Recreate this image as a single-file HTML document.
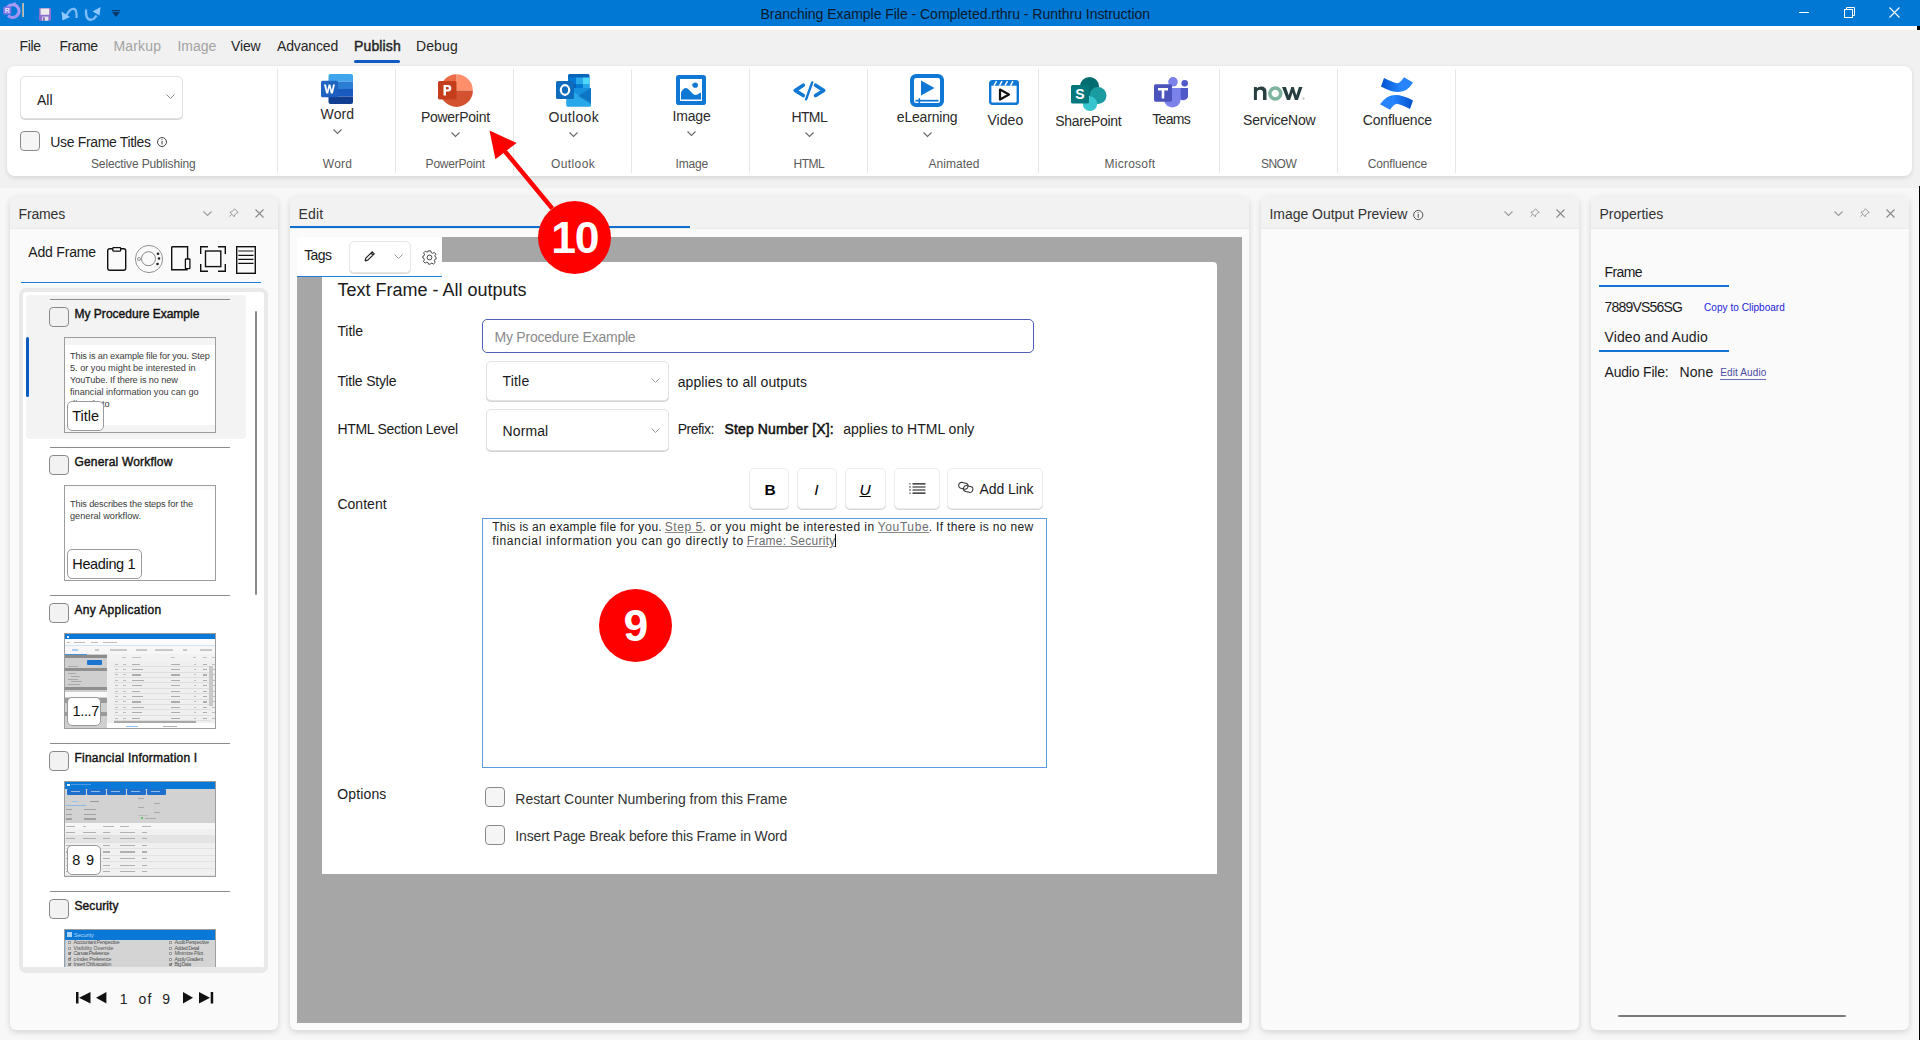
<!DOCTYPE html>
<html><head><meta charset="utf-8"><title>Runthru</title>
<style>
html,body{margin:0;padding:0;width:1920px;height:1040px;overflow:hidden;background:#f3f3f3;font-family:"Liberation Sans",sans-serif;}
.t{position:absolute;line-height:1;white-space:nowrap;}
svg{overflow:visible}
</style></head><body>
<div style="position:absolute;left:0px;top:0px;width:1920px;height:26px;background:#0078d4"></div>
<div style="position:absolute;left:0px;top:26px;width:1920px;height:4px;background:#ffffff"></div>
<div style="position:absolute;left:0px;top:30px;width:1920px;height:158px;background:#f1f1f1"></div>
<div style="position:absolute;left:0px;top:188px;width:1920px;height:852px;background:#f7f7f7"></div>
<div style="position:absolute;left:1919px;top:186px;width:1px;height:854px;background:#000"></div>
<div style="position:absolute;left:1917px;top:26px;width:3px;height:4px;background:#000"></div>
<svg style="position:absolute;left:0px;top:0px;" width="26" height="26" viewBox="0 0 26 26"><path d="M6.5 12 A6.3 6.3 0 1 1 18 14.5" fill="none" stroke="#a99cf5" stroke-width="3"/>
<path d="M8 15.5 A6.3 6.3 0 0 0 18.5 13" fill="none" stroke="#9f92f2" stroke-width="3"/>
<path d="M12 4.5 L14.6 2 L17.5 5.5z" fill="#a99cf5"/>
<rect x="3.1" y="6.6" width="8.2" height="7.8" rx="1.5" fill="#7f74e8"/>
<text x="7.2" y="13" font-size="7" font-weight="700" fill="#e8e4ff" text-anchor="middle" font-family="Liberation Sans">R</text></svg>
<div style="position:absolute;left:22px;top:3px;width:2px;height:14px;background:linear-gradient(90deg,#b49a78,#9fd0f0)"></div>
<svg style="position:absolute;left:39px;top:7.5px;" width="12" height="13" viewBox="0 0 12 13"><rect x="0" y="0" width="12" height="12.7" rx="0.8" fill="#8d6fcc"/><rect x="1.6" y="0.5" width="8.6" height="6.3" fill="#ececec"/><rect x="3.2" y="8.6" width="6.2" height="4.1" fill="#e6e2f0"/><rect x="4.3" y="9.3" width="1.3" height="3.4" fill="#5a3f9e"/></svg>
<svg style="position:absolute;left:61px;top:7px;" width="17" height="14" viewBox="0 0 17 14"><path d="M5.5 8.5 Q9 1 13.5 2 Q16 3.5 15.5 11" fill="none" stroke="#7dbcf8" stroke-width="2.4"/>
<path d="M0.5 4.5 L9 10 L1.5 13.6z" fill="#8ec8ff"/></svg>
<svg style="position:absolute;left:85px;top:7px;" width="16" height="14" viewBox="0 0 16 14"><path d="M1 2.5 Q0.5 12 5 12.8 Q9 13 11.5 8.5" fill="none" stroke="#7dbcf8" stroke-width="2.4"/>
<path d="M15.5 0 L14.6 8.5 L7.5 4.5z" fill="#8ec8ff"/></svg>
<svg style="position:absolute;left:112px;top:9px;" width="8" height="8" viewBox="0 0 8 8"><rect x="0" y="1" width="8" height="1.2" fill="#0a3a6a"/><path d="M0 3 L8 3 L4 8z" fill="#0a3a6a"/></svg>
<div class="t" style="left:760.5px;top:7.1px;font-size:14px;color:#0b1a2e;letter-spacing:-0.03px;">Branching Example File - Completed.rthru - Runthru Instruction</div>
<div style="position:absolute;left:1799px;top:12px;width:10px;height:1px;background:#fff"></div>
<svg style="position:absolute;left:1844px;top:7px;" width="11" height="11" viewBox="0 0 11 11"><rect x="0.5" y="2.5" width="8" height="8" fill="none" stroke="#fff" stroke-width="1"/><path d="M2.5 2.5 V0.5 H10.5 V8.5 H8.5" fill="none" stroke="#fff" stroke-width="1"/></svg>
<svg style="position:absolute;left:1889px;top:7px;" width="11" height="11" viewBox="0 0 11 11"><path d="M0.5 0.5 L10.5 10.5 M10.5 0.5 L0.5 10.5" stroke="#fff" stroke-width="1.1"/></svg>
<div class="t" style="left:19.4px;top:39.1px;font-size:14px;color:#262626;letter-spacing:-0.29px;">File</div>
<div class="t" style="left:59.4px;top:39.1px;font-size:14px;color:#262626;letter-spacing:-0.44px;">Frame</div>
<div class="t" style="left:113.4px;top:39.1px;font-size:14px;color:#a3a3a3;letter-spacing:0.20px;">Markup</div>
<div class="t" style="left:177.5px;top:39.1px;font-size:14px;color:#a3a3a3;letter-spacing:-0.05px;">Image</div>
<div class="t" style="left:231.0px;top:39.1px;font-size:14px;color:#262626;letter-spacing:-0.13px;">View</div>
<div class="t" style="left:277.0px;top:39.1px;font-size:14px;color:#262626;letter-spacing:-0.15px;">Advanced</div>
<div class="t" style="left:354.0px;top:39.1px;font-size:14px;color:#262626;-webkit-text-stroke:0.45px #262626;letter-spacing:0.13px;">Publish</div>
<div class="t" style="left:416.0px;top:39.1px;font-size:14px;color:#262626;letter-spacing:0.11px;">Debug</div>
<div style="position:absolute;left:354px;top:60px;width:46px;height:2.5px;background:#0f5bc2;border-radius:2px"></div>
<div style="position:absolute;left:7px;top:66px;width:1905px;height:110px;background:#fff;border-radius:8px;box-shadow:0 1.5px 4px rgba(0,0,0,0.11)"></div>
<div style="position:absolute;left:277px;top:69px;width:1px;height:104px;background:#e6e6e6"></div>
<div style="position:absolute;left:395px;top:69px;width:1px;height:104px;background:#e6e6e6"></div>
<div style="position:absolute;left:513px;top:69px;width:1px;height:104px;background:#e6e6e6"></div>
<div style="position:absolute;left:631px;top:69px;width:1px;height:104px;background:#e6e6e6"></div>
<div style="position:absolute;left:749px;top:69px;width:1px;height:104px;background:#e6e6e6"></div>
<div style="position:absolute;left:867px;top:69px;width:1px;height:104px;background:#e6e6e6"></div>
<div style="position:absolute;left:1038px;top:69px;width:1px;height:104px;background:#e6e6e6"></div>
<div style="position:absolute;left:1219px;top:69px;width:1px;height:104px;background:#e6e6e6"></div>
<div style="position:absolute;left:1337px;top:69px;width:1px;height:104px;background:#e6e6e6"></div>
<div style="position:absolute;left:1455px;top:69px;width:1px;height:104px;background:#e6e6e6"></div>
<div style="position:absolute;left:20px;top:76px;width:163px;height:43px;background:#fff;border:1px solid #e3e3e3;border-radius:5px;box-sizing:border-box;box-shadow:0 1px 0 #d6d6d6"></div>
<div class="t" style="left:37.0px;top:92.6px;font-size:14px;color:#1a1a1a;">All</div>
<svg style="position:absolute;left:166px;top:94px;" width="9" height="6" viewBox="0 0 9 6"><path d="M0.5 0.5 L4.5 4.5 L8.5 0.5" fill="none" stroke="#8a8a8a" stroke-width="1"/></svg>
<div style="position:absolute;left:20px;top:131px;width:20px;height:20px;background:#f5f5f5;border:1px solid #8a8a8a;border-radius:4px;box-sizing:border-box"></div>
<div class="t" style="left:50.3px;top:134.8px;font-size:14px;color:#1f1f1f;letter-spacing:-0.34px;">Use Frame Titles</div>
<svg style="position:absolute;left:157px;top:137px;" width="10" height="10" viewBox="0 0 10 10"><circle cx="5" cy="5" r="4.5" fill="none" stroke="#444" stroke-width="1"/><rect x="4.5" y="4" width="1" height="3.5" fill="#444"/><rect x="4.5" y="2.2" width="1" height="1" fill="#444"/></svg>
<div class="t" style="left:91.0px;top:157.6px;font-size:12px;color:#5a5a5a;letter-spacing:-0.14px;">Selective Publishing</div>
<div class="t" style="left:322.8px;top:157.6px;font-size:12px;color:#5a5a5a;letter-spacing:0.25px;">Word</div>
<div class="t" style="left:425.6px;top:157.6px;font-size:12px;color:#5a5a5a;letter-spacing:-0.21px;">PowerPoint</div>
<div class="t" style="left:551.0px;top:157.6px;font-size:12px;color:#5a5a5a;letter-spacing:0.39px;">Outlook</div>
<div class="t" style="left:675.5px;top:157.6px;font-size:12px;color:#5a5a5a;letter-spacing:-0.16px;">Image</div>
<div class="t" style="left:793.5px;top:157.6px;font-size:12px;color:#5a5a5a;letter-spacing:-0.52px;">HTML</div>
<div class="t" style="left:928.4px;top:157.6px;font-size:12px;color:#5a5a5a;letter-spacing:0.06px;">Animated</div>
<div class="t" style="left:1104.5px;top:157.6px;font-size:12px;color:#5a5a5a;letter-spacing:0.25px;">Microsoft</div>
<div class="t" style="left:1261.0px;top:157.6px;font-size:12px;color:#5a5a5a;letter-spacing:-0.54px;">SNOW</div>
<div class="t" style="left:1367.7px;top:157.6px;font-size:12px;color:#5a5a5a;letter-spacing:-0.14px;">Confluence</div>
<div class="t" style="left:320.6px;top:107.1px;font-size:14px;color:#2a2a2a;letter-spacing:0.10px;">Word</div>
<svg style="position:absolute;left:332.5px;top:128.5px;" width="9" height="5" viewBox="0 0 9 5"><path d="M0.5 0.5 L4.5 4.5 L8.5 0.5" fill="none" stroke="#6a6a6a" stroke-width="1.1"/></svg>
<div class="t" style="left:420.9px;top:109.7px;font-size:14px;color:#2a2a2a;letter-spacing:-0.27px;">PowerPoint</div>
<svg style="position:absolute;left:450.5px;top:131.6px;" width="9" height="5" viewBox="0 0 9 5"><path d="M0.5 0.5 L4.5 4.5 L8.5 0.5" fill="none" stroke="#6a6a6a" stroke-width="1.1"/></svg>
<div class="t" style="left:548.5px;top:109.7px;font-size:14px;color:#2a2a2a;letter-spacing:0.33px;">Outlook</div>
<svg style="position:absolute;left:568.5px;top:131.6px;" width="9" height="5" viewBox="0 0 9 5"><path d="M0.5 0.5 L4.5 4.5 L8.5 0.5" fill="none" stroke="#6a6a6a" stroke-width="1.1"/></svg>
<div class="t" style="left:672.5px;top:109.1px;font-size:14px;color:#2a2a2a;letter-spacing:-0.18px;">Image</div>
<svg style="position:absolute;left:686.5px;top:131px;" width="9" height="5" viewBox="0 0 9 5"><path d="M0.5 0.5 L4.5 4.5 L8.5 0.5" fill="none" stroke="#6a6a6a" stroke-width="1.1"/></svg>
<div class="t" style="left:791.4px;top:110.0px;font-size:14px;color:#2a2a2a;letter-spacing:-0.60px;">HTML</div>
<svg style="position:absolute;left:804.5px;top:131.6px;" width="9" height="5" viewBox="0 0 9 5"><path d="M0.5 0.5 L4.5 4.5 L8.5 0.5" fill="none" stroke="#6a6a6a" stroke-width="1.1"/></svg>
<div class="t" style="left:896.8px;top:110.0px;font-size:14px;color:#2a2a2a;letter-spacing:-0.18px;">eLearning</div>
<svg style="position:absolute;left:922.5px;top:131.6px;" width="9" height="5" viewBox="0 0 9 5"><path d="M0.5 0.5 L4.5 4.5 L8.5 0.5" fill="none" stroke="#6a6a6a" stroke-width="1.1"/></svg>
<div class="t" style="left:987.5px;top:113.1px;font-size:14px;color:#2a2a2a;letter-spacing:0.04px;">Video</div>
<div class="t" style="left:1055.3px;top:113.9px;font-size:14px;color:#2a2a2a;letter-spacing:-0.32px;">SharePoint</div>
<div class="t" style="left:1152.3px;top:111.7px;font-size:14px;color:#2a2a2a;letter-spacing:-0.71px;">Teams</div>
<div class="t" style="left:1243.1px;top:112.9px;font-size:14px;color:#2a2a2a;letter-spacing:-0.24px;">ServiceNow</div>
<div class="t" style="left:1362.8px;top:112.8px;font-size:14px;color:#2a2a2a;letter-spacing:-0.18px;">Confluence</div>
<svg style="position:absolute;left:321px;top:74px;" width="32" height="30" viewBox="0 0 32 30"><defs><linearGradient id="wg" x1="0" y1="0" x2="1" y2="1"><stop offset="0" stop-color="#2368c4"/><stop offset="1" stop-color="#1a5dbe"/></linearGradient></defs>
<path d="M9.5 0 H30 a2 2 0 0 1 2 2 V7.5 H7.5 V2 a2 2 0 0 1 2-2z" fill="#41a5ee"/>
<rect x="7.5" y="7.5" width="24.5" height="7.5" fill="#2b7cd3"/>
<rect x="7.5" y="15" width="24.5" height="7.5" fill="#185abd"/>
<path d="M7.5 22.5 H32 V28 a2 2 0 0 1-2 2 H9.5 a2 2 0 0 1-2-2z" fill="#103f91"/>
<rect x="0" y="6.8" width="17" height="16.4" rx="1.5" fill="url(#wg)"/>
<path d="M3 10.5 L5.2 19.5 L7.2 19.5 L8.5 13.8 L9.8 19.5 L11.8 19.5 L14 10.5 L12 10.5 L10.8 16.5 L9.4 10.5 L7.6 10.5 L6.2 16.5 L5 10.5z" fill="#fff"/></svg>
<svg style="position:absolute;left:438px;top:74px;" width="35" height="33" viewBox="0 0 35 33"><path d="M18.5 16.5 V0.2 A16.4 16.4 0 0 1 34.9 16.5z" fill="#ff8f6b"/>
<path d="M18.5 16.5 H34.9 A16.4 16.4 0 0 1 2.1 16.5z" fill="#d35230"/>
<path d="M18.5 0.2 V16.5 H2.1 A16.4 16.4 0 0 1 18.5 0.2z" fill="#ed6c47"/>
<rect x="0" y="7" width="18.5" height="18.5" rx="1.6" fill="#c43e1c"/>
<path d="M5.5 11 H10 a3.3 3.3 0 0 1 0 6.6 H8 V21.5 H5.5z M8 13 V15.6 H9.6 a1.3 1.3 0 0 0 0-2.6z" fill="#fff" fill-rule="evenodd"/></svg>
<svg style="position:absolute;left:556px;top:74px;" width="36" height="33" viewBox="0 0 36 33"><path d="M12 1.5 a1.5 1.5 0 0 1 1.5-1.5 H32 a1.5 1.5 0 0 1 1.5 1.5 V17 H12z" fill="#0364b8"/>
<rect x="12" y="3.5" width="8" height="7" fill="#0078d4"/><rect x="20" y="3.5" width="7" height="7" fill="#28a8ea"/><rect x="27" y="3.5" width="6.5" height="7" fill="#50d9ff"/>
<rect x="12" y="10.5" width="8" height="7" fill="#0364b8"/><rect x="20" y="10.5" width="7" height="7" fill="#0078d4"/><rect x="27" y="10.5" width="6.5" height="7" fill="#28a8ea"/>
<path d="M10.5 14 L35 14 V31 a1.6 1.6 0 0 1-1.6 1.6 H12.1 a1.6 1.6 0 0 1-1.6-1.6z" fill="#1490df"/>
<path d="M10.5 14 L35 28 V31 a1.6 1.6 0 0 1-1.6 1.6 H12.1 a1.6 1.6 0 0 1-1.6-1.6z" fill="#28a8ea"/>
<path d="M35 14 L22 22 L35 30z" fill="#0a5fb0" opacity="0.55"/>
<rect x="0" y="7" width="18" height="18" rx="1.6" fill="#0f6cbd"/>
<ellipse cx="9" cy="16" rx="4.2" ry="4.8" fill="none" stroke="#fff" stroke-width="2.2"/></svg>
<svg style="position:absolute;left:676px;top:75px;" width="30" height="30" viewBox="0 0 30 30"><rect x="2" y="2" width="26" height="26" fill="none" stroke="#0f78d4" stroke-width="4" rx="0.8"/>
<path d="M5 24.5 V17.5 Q8 11.5 11.5 13.5 Q14 15.5 17 19 Q20 21 23 18.5 L25 17.5 V24.5z" fill="#0f78d4"/>
<circle cx="19.3" cy="10.2" r="2.6" fill="#0f78d4"/><circle cx="17.2" cy="9.8" r="1.6" fill="#0f78d4" opacity="0.5"/></svg>
<svg style="position:absolute;left:793px;top:81px;" width="33" height="19" viewBox="0 0 33 19"><path d="M10.3 4.2 L2.2 9.4 L10.3 14.6" fill="none" stroke="#0f78d4" stroke-width="3.6" stroke-linecap="round" stroke-linejoin="round"/>
<path d="M22.6 4.2 L30.7 9.4 L22.6 14.6" fill="none" stroke="#0f78d4" stroke-width="3.6" stroke-linecap="round" stroke-linejoin="round"/>
<path d="M19.2 1.4 L13.1 18.3" stroke="#0f78d4" stroke-width="2.4" stroke-linecap="round"/></svg>
<svg style="position:absolute;left:910px;top:74px;" width="34" height="33" viewBox="0 0 34 33"><rect x="2" y="2" width="30" height="29" rx="4" fill="none" stroke="#0f78d4" stroke-width="4"/>
<path d="M11 6.5 L24.5 14 L11 21.5z" fill="#0f78d4"/>
<rect x="5.5" y="25.8" width="23" height="1.8" fill="#0f78d4"/><rect x="8.5" y="24.2" width="1.6" height="5" fill="#0f78d4"/></svg>
<svg style="position:absolute;left:989px;top:79.5px;" width="30" height="25" viewBox="0 0 30 25"><rect x="1.2" y="1.2" width="27.6" height="22.6" rx="2" fill="none" stroke="#0f78d4" stroke-width="2.4"/>
<rect x="1.2" y="1.2" width="27.6" height="4.5" fill="#0f78d4"/>
<path d="M5 5.7 L7.5 1.2 M10.5 5.7 L13 1.2 M16 5.7 L18.5 1.2 M21.5 5.7 L24 1.2" stroke="#fff" stroke-width="1.4"/>
<path d="M11 9.5 L20 14.5 L11 19.5z" fill="none" stroke="#111" stroke-width="2.2" stroke-linejoin="round"/></svg>
<svg style="position:absolute;left:1071px;top:77px;" width="36" height="34" viewBox="0 0 36 34"><circle cx="18.5" cy="9.5" r="9.5" fill="#036c70"/>
<circle cx="27" cy="18.5" r="8.5" fill="#1a9ba1"/>
<circle cx="19" cy="26.8" r="7.2" fill="#37c6d0"/>
<rect x="0" y="8" width="18" height="18.5" rx="1.6" fill="#03787c"/>
<text x="9" y="22.3" font-size="14" font-weight="700" fill="#fff" text-anchor="middle" font-family="Liberation Sans">S</text></svg>
<svg style="position:absolute;left:1154px;top:77px;" width="35" height="33" viewBox="0 0 35 33"><circle cx="19" cy="4.8" r="4.8" fill="#7b83eb"/>
<circle cx="30.7" cy="6.3" r="3.3" fill="#5059c9"/>
<path d="M26 11 H34 V20 a5 5 0 0 1-8 2z" fill="#5059c9"/>
<path d="M10 11 H26.7 V23 a8.4 8.4 0 0 1-16.7 0z" fill="#7b83eb"/>
<rect x="0" y="7.2" width="18" height="17.5" rx="1.6" fill="#4b53bc"/>
<path d="M4 11 H14 V13.4 H10.3 V21.5 H7.7 V13.4 H4z" fill="#fff"/></svg>
<svg style="position:absolute;left:1253px;top:86px;" width="52" height="15" viewBox="0 0 52 15"><path d="M0.9 13.9 V0.9 H3.9 V2.2 Q5.5 0.5 8 0.5 Q13.5 0.5 13.5 6 V13.9 H10 V6.6 Q10 3.7 7.2 3.7 Q3.9 3.7 3.9 6.8 V13.9z" fill="#293e40"/>
<path d="M22.3 0.3 a7.2 7.2 0 1 0 0.01 0z M22.3 3.8 a3.7 3.7 0 1 1-0.01 0z" fill="#7fb5a0" fill-rule="evenodd"/>
<path d="M29 0.9 H32.9 L35.7 9.3 L38.3 0.9 H40.7 L43.3 9.3 L45.9 0.9 H49.5 L44.9 13.9 H41.9 L39.5 6.6 L37.1 13.9 H34z" fill="#293e40"/>
<circle cx="50.5" cy="12.5" r="1.1" fill="#bbb"/></svg>
<svg style="position:absolute;left:1380px;top:77px;" width="34" height="33" viewBox="0 0 34 33"><defs><linearGradient id="cg1" x1="0" y1="0" x2="1" y2="0"><stop offset="0" stop-color="#0052cc"/><stop offset="0.6" stop-color="#2684ff"/></linearGradient>
<linearGradient id="cg2" x1="1" y1="0" x2="0" y2="0"><stop offset="0" stop-color="#0052cc"/><stop offset="0.6" stop-color="#2684ff"/></linearGradient></defs>
<path d="M1 9.5 L4 1 Q14 6 17 6.2 Q20 6.2 24 0.2 L33 5.6 Q27.5 15 18.5 15 Q11 15 1 9.5z" fill="url(#cg1)"/>
<path d="M33 23.5 L30 32 Q20 27 17 26.8 Q14 26.8 10 32.8 L0 27.3 Q6.5 18 15.5 18 Q23 18 33 23.5z" fill="url(#cg2)"/></svg>
<div style="position:absolute;left:10px;top:197px;width:268px;height:833px;background:#fafafa;border-radius:6px;box-shadow:0 2px 6px rgba(0,0,0,0.15)"></div>
<div style="position:absolute;left:10px;top:197px;width:268px;height:31px;background:#f2f2f2;border-radius:6px 6px 0 0;box-shadow:0 1px 0 #ececec"></div>
<div class="t" style="left:18.5px;top:206.9px;font-size:14px;color:#333;letter-spacing:-0.15px;">Frames</div>
<svg style="position:absolute;left:203px;top:211px;" width="9" height="5" viewBox="0 0 9 5"><path d="M0.5 0.5 L4.5 4.5 L8.5 0.5" fill="none" stroke="#9a9a9a" stroke-width="1.1"/></svg>
<svg style="position:absolute;left:229px;top:208px;" width="10" height="9" viewBox="0 0 10 9"><path d="M5.5 0.8 L9.2 4.5 L7.6 5 L5.8 6.8 L5.3 8.8 L0.9 4.2 L2.9 3.6 L4.8 1.8z M2.8 6.2 L0.4 8.6" fill="none" stroke="#9a9a9a" stroke-width="1"/></svg>
<svg style="position:absolute;left:255px;top:208.5px;" width="9" height="9" viewBox="0 0 9 9"><path d="M0.5 0.5 L8.5 8.5 M8.5 0.5 L0.5 8.5" stroke="#8a8a8a" stroke-width="1.1"/></svg>
<div style="position:absolute;left:290px;top:197px;width:959px;height:833px;background:#fafafa;border-radius:6px;box-shadow:0 2px 6px rgba(0,0,0,0.15)"></div>
<div style="position:absolute;left:290px;top:197px;width:959px;height:31px;background:#f2f2f2;border-radius:6px 6px 0 0;box-shadow:0 1px 0 #ececec"></div>
<div class="t" style="left:298.5px;top:206.9px;font-size:14px;color:#333;letter-spacing:0.19px;">Edit</div>
<div style="position:absolute;left:1261px;top:197px;width:318px;height:833px;background:#fafafa;border-radius:6px;box-shadow:0 2px 6px rgba(0,0,0,0.15)"></div>
<div style="position:absolute;left:1261px;top:197px;width:318px;height:31px;background:#f2f2f2;border-radius:6px 6px 0 0;box-shadow:0 1px 0 #ececec"></div>
<div class="t" style="left:1269.5px;top:206.9px;font-size:14px;color:#333;letter-spacing:-0.04px;">Image Output Preview</div>
<svg style="position:absolute;left:1504px;top:211px;" width="9" height="5" viewBox="0 0 9 5"><path d="M0.5 0.5 L4.5 4.5 L8.5 0.5" fill="none" stroke="#9a9a9a" stroke-width="1.1"/></svg>
<svg style="position:absolute;left:1530px;top:208px;" width="10" height="9" viewBox="0 0 10 9"><path d="M5.5 0.8 L9.2 4.5 L7.6 5 L5.8 6.8 L5.3 8.8 L0.9 4.2 L2.9 3.6 L4.8 1.8z M2.8 6.2 L0.4 8.6" fill="none" stroke="#9a9a9a" stroke-width="1"/></svg>
<svg style="position:absolute;left:1556px;top:208.5px;" width="9" height="9" viewBox="0 0 9 9"><path d="M0.5 0.5 L8.5 8.5 M8.5 0.5 L0.5 8.5" stroke="#8a8a8a" stroke-width="1.1"/></svg>
<div style="position:absolute;left:1591px;top:197px;width:318px;height:833px;background:#fafafa;border-radius:6px;box-shadow:0 2px 6px rgba(0,0,0,0.15)"></div>
<div style="position:absolute;left:1591px;top:197px;width:318px;height:31px;background:#f2f2f2;border-radius:6px 6px 0 0;box-shadow:0 1px 0 #ececec"></div>
<div class="t" style="left:1599.5px;top:206.9px;font-size:14px;color:#333;letter-spacing:-0.01px;">Properties</div>
<svg style="position:absolute;left:1834px;top:211px;" width="9" height="5" viewBox="0 0 9 5"><path d="M0.5 0.5 L4.5 4.5 L8.5 0.5" fill="none" stroke="#9a9a9a" stroke-width="1.1"/></svg>
<svg style="position:absolute;left:1860px;top:208px;" width="10" height="9" viewBox="0 0 10 9"><path d="M5.5 0.8 L9.2 4.5 L7.6 5 L5.8 6.8 L5.3 8.8 L0.9 4.2 L2.9 3.6 L4.8 1.8z M2.8 6.2 L0.4 8.6" fill="none" stroke="#9a9a9a" stroke-width="1"/></svg>
<svg style="position:absolute;left:1886px;top:208.5px;" width="9" height="9" viewBox="0 0 9 9"><path d="M0.5 0.5 L8.5 8.5 M8.5 0.5 L0.5 8.5" stroke="#8a8a8a" stroke-width="1.1"/></svg>
<svg style="position:absolute;left:1413px;top:209.5px;" width="11" height="11" viewBox="0 0 11 11"><circle cx="5.25" cy="5" r="4.6" fill="none" stroke="#555" stroke-width="1"/><rect x="4.75" y="4" width="1" height="3.8" fill="#555"/><rect x="4.75" y="2.2" width="1" height="1" fill="#555"/></svg>
<div style="position:absolute;left:290px;top:226px;width:400px;height:2px;background:#0f6fce"></div>
<div class="t" style="left:28.3px;top:244.9px;font-size:14px;color:#1a1a1a;letter-spacing:-0.19px;">Add Frame</div>
<svg style="position:absolute;left:107px;top:247px;" width="20" height="24" viewBox="0 0 20 24"><rect x="0.7" y="1.7" width="18" height="21.6" rx="2" fill="none" stroke="#111" stroke-width="1.4"/><rect x="5.8" y="0.7" width="7.8" height="3.4" rx="0.5" fill="#fff" stroke="#111" stroke-width="1.3"/></svg>
<svg style="position:absolute;left:135px;top:245px;" width="28" height="28" viewBox="0 0 28 28"><circle cx="14" cy="14" r="13.6" fill="none" stroke="#777" stroke-width="0.8"/><circle cx="13.5" cy="13.7" r="7" fill="none" stroke="#777" stroke-width="0.9"/><circle cx="4" cy="14" r="1.5" fill="none" stroke="#777" stroke-width="0.8"/><circle cx="23" cy="8.7" r="1.3" fill="#222"/><circle cx="24" cy="13.5" r="1.3" fill="#222"/><circle cx="22.5" cy="19" r="1.3" fill="#222"/></svg>
<svg style="position:absolute;left:171px;top:246px;" width="20" height="25" viewBox="0 0 20 25"><path d="M0.7 0.7 H16.6 V15.5 M16.6 23.8 H0.7 V0.7" fill="none" stroke="#111" stroke-width="1.4"/><rect x="14.4" y="13" width="4.5" height="9.7" rx="0.5" fill="#fff" stroke="#111" stroke-width="1.3"/></svg>
<svg style="position:absolute;left:200px;top:246px;" width="26" height="26" viewBox="0 0 26 26"><path d="M0.7 8 V0.7 H8 M18 0.7 H25.3 V8 M25.3 18 V25.3 H18 M8 25.3 H0.7 V18" fill="none" stroke="#111" stroke-width="1.4"/><rect x="5.5" y="5" width="15.3" height="15.6" fill="none" stroke="#111" stroke-width="1.4"/></svg>
<svg style="position:absolute;left:236px;top:246px;" width="20" height="28" viewBox="0 0 20 28"><rect x="0.7" y="0.7" width="18.6" height="26.6" fill="none" stroke="#111" stroke-width="1.4"/><path d="M2.3 5 H17.5 M2.3 9.3 H17.5 M2.3 13.4 H17.5 M2.3 17.3 H17.5" stroke="#111" stroke-width="1.2"/></svg>
<div style="position:absolute;left:21px;top:282px;width:240px;height:1.2px;background:#1b7fd6"></div>
<div style="position:absolute;left:18.5px;top:287.5px;width:249px;height:685px;background:#fff;border:4.5px solid #e9e9e9;border-radius:7px;box-sizing:border-box"></div>
<div style="position:absolute;left:26px;top:295px;width:220px;height:144px;background:#f3f3f3;border-radius:4px"></div>
<div style="position:absolute;left:26px;top:337px;width:3px;height:60px;background:#0d5cc0;border-radius:2px"></div>
<div style="position:absolute;left:255px;top:311px;width:2px;height:284px;background:#8a8a8a;border-radius:1px"></div>
<div style="position:absolute;left:50px;top:299px;width:180px;height:1px;background:#8c8c8c"></div>
<div style="position:absolute;left:49px;top:307px;width:20px;height:19.5px;background:#f2f2f2;border:1px solid #8a8a8a;border-radius:4px;box-sizing:border-box"></div>
<div class="t" style="left:74.5px;top:308.3px;font-size:12px;color:#111;-webkit-text-stroke:0.4px #111;letter-spacing:0.01px;">My Procedure Example</div>
<div style="position:absolute;left:50px;top:447px;width:180px;height:1px;background:#8c8c8c"></div>
<div style="position:absolute;left:49px;top:455px;width:20px;height:19.5px;background:#f2f2f2;border:1px solid #8a8a8a;border-radius:4px;box-sizing:border-box"></div>
<div class="t" style="left:74.5px;top:456.3px;font-size:12px;color:#111;-webkit-text-stroke:0.4px #111;letter-spacing:0.18px;">General Workflow</div>
<div style="position:absolute;left:50px;top:595px;width:180px;height:1px;background:#8c8c8c"></div>
<div style="position:absolute;left:49px;top:603px;width:20px;height:19.5px;background:#f2f2f2;border:1px solid #8a8a8a;border-radius:4px;box-sizing:border-box"></div>
<div class="t" style="left:74.5px;top:604.3px;font-size:12px;color:#111;-webkit-text-stroke:0.4px #111;letter-spacing:0.33px;">Any Application</div>
<div style="position:absolute;left:50px;top:743px;width:180px;height:1px;background:#8c8c8c"></div>
<div style="position:absolute;left:49px;top:751px;width:20px;height:19.5px;background:#f2f2f2;border:1px solid #8a8a8a;border-radius:4px;box-sizing:border-box"></div>
<div class="t" style="left:74.5px;top:752.3px;font-size:12px;color:#111;-webkit-text-stroke:0.4px #111;letter-spacing:0.21px;">Financial Information I</div>
<div style="position:absolute;left:50px;top:891px;width:180px;height:1px;background:#8c8c8c"></div>
<div style="position:absolute;left:49px;top:899px;width:20px;height:19.5px;background:#f2f2f2;border:1px solid #8a8a8a;border-radius:4px;box-sizing:border-box"></div>
<div class="t" style="left:74.5px;top:900.3px;font-size:12px;color:#111;-webkit-text-stroke:0.4px #111;letter-spacing:0.09px;">Security</div>
<div style="position:absolute;left:64px;top:337px;width:152px;height:96px;background:#fff;border:1px solid #9d9d9d;box-sizing:border-box"></div>
<div style="position:absolute;left:65px;top:338px;width:150px;height:7px;background:#f4f4f4"></div>
<div style="position:absolute;left:65px;top:425px;width:150px;height:7px;background:#f4f4f4"></div>
<div class="t" style="left:70.0px;top:352.2px;font-size:9.2px;color:#3a3a3a;letter-spacing:-0.16px;">This is an example file for you. Step</div>
<div class="t" style="left:70.0px;top:364.2px;font-size:9.2px;color:#3a3a3a;letter-spacing:-0.02px;">5. or you might be interested in</div>
<div class="t" style="left:70.0px;top:376.2px;font-size:9.2px;color:#3a3a3a;letter-spacing:-0.13px;">YouTube. If there is no new</div>
<div class="t" style="left:70.0px;top:388.2px;font-size:9.2px;color:#3a3a3a;letter-spacing:-0.02px;">financial information you can go</div>
<div class="t" style="left:70.0px;top:400.2px;font-size:9.2px;color:#3a3a3a;letter-spacing:0.03px;">directly to</div>
<div style="position:absolute;left:66.5px;top:400.5px;width:37.0px;height:30.0px;background:#fff;border:1px solid #9a9a9a;border-radius:5px;box-sizing:border-box"></div>
<div class="t" style="left:72.3px;top:408.9px;font-size:14.5px;color:#111;letter-spacing:-0.04px;">Title</div>
<div style="position:absolute;left:64px;top:485px;width:152px;height:96px;background:#fff;border:1px solid #9d9d9d;box-sizing:border-box"></div>
<div style="position:absolute;left:65px;top:486px;width:150px;height:4px;background:#fafafa"></div>
<div class="t" style="left:70.0px;top:500.2px;font-size:9.2px;color:#3a3a3a;letter-spacing:-0.15px;">This describes the steps for the</div>
<div class="t" style="left:70.0px;top:512.2px;font-size:9.2px;color:#3a3a3a;letter-spacing:-0.00px;">general workflow.</div>
<div style="position:absolute;left:66.5px;top:548.5px;width:75.5px;height:30.0px;background:#fff;border:1px solid #9a9a9a;border-radius:5px;box-sizing:border-box"></div>
<div class="t" style="left:72.3px;top:556.9px;font-size:14.5px;color:#111;letter-spacing:-0.36px;">Heading 1</div>
<div style="position:absolute;left:64px;top:633px;width:152px;height:96px;background:#efefef;border:1px solid #9d9d9d;box-sizing:border-box;overflow:hidden"></div>
<div style="position:absolute;left:65px;top:634px;width:150px;height:5px;background:#0a78d6"></div>
<div style="position:absolute;left:67px;top:635.5px;width:2px;height:2px;background:#dfefff"></div>
<div style="position:absolute;left:65px;top:639px;width:150px;height:6px;background:#fbfbfb"></div>
<div style="position:absolute;left:67px;top:641.5px;width:3px;height:1.5px;background:#bdbdbd"></div>
<div style="position:absolute;left:74px;top:641.5px;width:11px;height:1.5px;background:#bdbdbd"></div>
<div style="position:absolute;left:91px;top:641.5px;width:7px;height:1.5px;background:#bdbdbd"></div>
<div style="position:absolute;left:103px;top:641.5px;width:14px;height:1.5px;background:#bdbdbd"></div>
<div style="position:absolute;left:65px;top:645px;width:150px;height:1px;background:#cfe3f5"></div>
<div style="position:absolute;left:65px;top:646px;width:150px;height:8px;background:#f7f7f7"></div>
<div style="position:absolute;left:72px;top:649px;width:6px;height:1.6px;background:#a8cdf2"></div>
<div style="position:absolute;left:95px;top:649px;width:4px;height:1.6px;background:#c8c8c8"></div>
<div style="position:absolute;left:110px;top:649px;width:17px;height:1.6px;background:#c8c8c8"></div>
<div style="position:absolute;left:136px;top:649px;width:11px;height:1.6px;background:#c8c8c8"></div>
<div style="position:absolute;left:155px;top:649px;width:18px;height:1.6px;background:#c8c8c8"></div>
<div style="position:absolute;left:183px;top:649px;width:4px;height:1.6px;background:#c8c8c8"></div>
<div style="position:absolute;left:200px;top:649px;width:12px;height:1.6px;background:#c8c8c8"></div>
<div style="position:absolute;left:65px;top:654px;width:42px;height:74px;background:#cfcfcf"></div>
<div style="position:absolute;left:65px;top:653.5px;width:22px;height:1px;background:#4a90d9"></div>
<div style="position:absolute;left:65px;top:654.5px;width:42px;height:3.5px;background:#8c8c8c"></div>
<div style="position:absolute;left:87px;top:660px;width:15px;height:4.5px;background:#1d74d0;border-radius:1px"></div>
<div style="position:absolute;left:68px;top:666px;width:10px;height:1px;background:#aaa"></div>
<div style="position:absolute;left:65px;top:667.5px;width:42px;height:3px;background:#8f8f8f"></div>
<div style="position:absolute;left:68px;top:673.0px;width:8px;height:1px;background:#a8a8a8"></div>
<div style="position:absolute;left:71px;top:675.8px;width:9px;height:1px;background:#a8a8a8"></div>
<div style="position:absolute;left:68px;top:678.6px;width:10px;height:1px;background:#a8a8a8"></div>
<div style="position:absolute;left:71px;top:681.4px;width:11px;height:1px;background:#a8a8a8"></div>
<div style="position:absolute;left:68px;top:684.2px;width:12px;height:1px;background:#a8a8a8"></div>
<div style="position:absolute;left:65px;top:687px;width:42px;height:3px;background:#8f8f8f"></div>
<div style="position:absolute;left:65px;top:691.5px;width:42px;height:5px;background:#fafafa"></div>
<div style="position:absolute;left:65px;top:698px;width:42px;height:5px;background:#9a9a9a"></div>
<div style="position:absolute;left:65px;top:712px;width:42px;height:4px;background:#9a9a9a"></div>
<div style="position:absolute;left:107px;top:654px;width:108px;height:7px;background:#f2f2f2"></div>
<div style="position:absolute;left:122px;top:656.5px;width:4px;height:1.4px;background:#c4c4c4"></div>
<div style="position:absolute;left:132px;top:656.5px;width:9px;height:1.4px;background:#c4c4c4"></div>
<div style="position:absolute;left:171px;top:656.5px;width:4px;height:1.4px;background:#c4c4c4"></div>
<div style="position:absolute;left:193px;top:656.5px;width:3px;height:1.4px;background:#c4c4c4"></div>
<div style="position:absolute;left:203px;top:656.5px;width:4px;height:1.4px;background:#c4c4c4"></div>
<div style="position:absolute;left:212px;top:656.5px;width:3px;height:1.4px;background:#c4c4c4"></div>
<div style="position:absolute;left:114px;top:666.2px;width:97px;height:0.6px;background:#dedede"></div>
<div style="position:absolute;left:115px;top:663.5px;width:3px;height:1.2px;background:#bdbdbd"></div>
<div style="position:absolute;left:123px;top:663.5px;width:3px;height:1.2px;background:#bdbdbd"></div>
<div style="position:absolute;left:132px;top:663.5px;width:8px;height:1.4px;background:#adadad"></div>
<div style="position:absolute;left:171px;top:663.5px;width:9px;height:1.4px;background:#adadad"></div>
<div style="position:absolute;left:194px;top:663.5px;width:2px;height:1.2px;background:#bdbdbd"></div>
<div style="position:absolute;left:203px;top:663.5px;width:4px;height:1.4px;background:#adadad"></div>
<div style="position:absolute;left:212px;top:663.5px;width:3px;height:1.2px;background:#bdbdbd"></div>
<div style="position:absolute;left:114px;top:671.6px;width:97px;height:0.6px;background:#dedede"></div>
<div style="position:absolute;left:115px;top:668.9px;width:3px;height:1.2px;background:#bdbdbd"></div>
<div style="position:absolute;left:123px;top:668.9px;width:3px;height:1.2px;background:#bdbdbd"></div>
<div style="position:absolute;left:132px;top:668.9px;width:11px;height:1.4px;background:#adadad"></div>
<div style="position:absolute;left:171px;top:668.9px;width:9px;height:1.4px;background:#adadad"></div>
<div style="position:absolute;left:194px;top:668.9px;width:2px;height:1.2px;background:#bdbdbd"></div>
<div style="position:absolute;left:203px;top:668.9px;width:4px;height:1.4px;background:#adadad"></div>
<div style="position:absolute;left:212px;top:668.9px;width:3px;height:1.2px;background:#bdbdbd"></div>
<div style="position:absolute;left:114px;top:677.0px;width:97px;height:0.6px;background:#dedede"></div>
<div style="position:absolute;left:115px;top:674.3px;width:3px;height:1.2px;background:#bdbdbd"></div>
<div style="position:absolute;left:123px;top:674.3px;width:3px;height:1.2px;background:#bdbdbd"></div>
<div style="position:absolute;left:132px;top:674.3px;width:9px;height:1.4px;background:#adadad"></div>
<div style="position:absolute;left:171px;top:674.3px;width:9px;height:1.4px;background:#adadad"></div>
<div style="position:absolute;left:194px;top:674.3px;width:2px;height:1.2px;background:#bdbdbd"></div>
<div style="position:absolute;left:203px;top:674.3px;width:4px;height:1.4px;background:#adadad"></div>
<div style="position:absolute;left:212px;top:674.3px;width:3px;height:1.2px;background:#bdbdbd"></div>
<div style="position:absolute;left:114px;top:682.4000000000001px;width:97px;height:0.6px;background:#dedede"></div>
<div style="position:absolute;left:115px;top:679.7px;width:3px;height:1.2px;background:#bdbdbd"></div>
<div style="position:absolute;left:123px;top:679.7px;width:3px;height:1.2px;background:#bdbdbd"></div>
<div style="position:absolute;left:132px;top:679.7px;width:12px;height:1.4px;background:#adadad"></div>
<div style="position:absolute;left:171px;top:679.7px;width:9px;height:1.4px;background:#adadad"></div>
<div style="position:absolute;left:194px;top:679.7px;width:2px;height:1.2px;background:#bdbdbd"></div>
<div style="position:absolute;left:203px;top:679.7px;width:4px;height:1.4px;background:#adadad"></div>
<div style="position:absolute;left:212px;top:679.7px;width:3px;height:1.2px;background:#bdbdbd"></div>
<div style="position:absolute;left:114px;top:687.8000000000001px;width:97px;height:0.6px;background:#dedede"></div>
<div style="position:absolute;left:115px;top:685.1px;width:3px;height:1.2px;background:#bdbdbd"></div>
<div style="position:absolute;left:123px;top:685.1px;width:3px;height:1.2px;background:#bdbdbd"></div>
<div style="position:absolute;left:132px;top:685.1px;width:10px;height:1.4px;background:#adadad"></div>
<div style="position:absolute;left:171px;top:685.1px;width:9px;height:1.4px;background:#adadad"></div>
<div style="position:absolute;left:194px;top:685.1px;width:2px;height:1.2px;background:#bdbdbd"></div>
<div style="position:absolute;left:203px;top:685.1px;width:4px;height:1.4px;background:#adadad"></div>
<div style="position:absolute;left:212px;top:685.1px;width:3px;height:1.2px;background:#bdbdbd"></div>
<div style="position:absolute;left:114px;top:693.2px;width:97px;height:0.6px;background:#dedede"></div>
<div style="position:absolute;left:115px;top:690.5px;width:3px;height:1.2px;background:#bdbdbd"></div>
<div style="position:absolute;left:123px;top:690.5px;width:3px;height:1.2px;background:#bdbdbd"></div>
<div style="position:absolute;left:132px;top:690.5px;width:8px;height:1.4px;background:#adadad"></div>
<div style="position:absolute;left:171px;top:690.5px;width:9px;height:1.4px;background:#adadad"></div>
<div style="position:absolute;left:194px;top:690.5px;width:2px;height:1.2px;background:#bdbdbd"></div>
<div style="position:absolute;left:203px;top:690.5px;width:4px;height:1.4px;background:#adadad"></div>
<div style="position:absolute;left:212px;top:690.5px;width:3px;height:1.2px;background:#bdbdbd"></div>
<div style="position:absolute;left:114px;top:698.6px;width:97px;height:0.6px;background:#dedede"></div>
<div style="position:absolute;left:115px;top:695.9px;width:3px;height:1.2px;background:#bdbdbd"></div>
<div style="position:absolute;left:123px;top:695.9px;width:3px;height:1.2px;background:#bdbdbd"></div>
<div style="position:absolute;left:132px;top:695.9px;width:11px;height:1.4px;background:#adadad"></div>
<div style="position:absolute;left:171px;top:695.9px;width:9px;height:1.4px;background:#adadad"></div>
<div style="position:absolute;left:194px;top:695.9px;width:2px;height:1.2px;background:#bdbdbd"></div>
<div style="position:absolute;left:203px;top:695.9px;width:4px;height:1.4px;background:#adadad"></div>
<div style="position:absolute;left:212px;top:695.9px;width:3px;height:1.2px;background:#bdbdbd"></div>
<div style="position:absolute;left:114px;top:704.0px;width:97px;height:0.6px;background:#dedede"></div>
<div style="position:absolute;left:115px;top:701.3px;width:3px;height:1.2px;background:#bdbdbd"></div>
<div style="position:absolute;left:123px;top:701.3px;width:3px;height:1.2px;background:#bdbdbd"></div>
<div style="position:absolute;left:132px;top:701.3px;width:9px;height:1.4px;background:#adadad"></div>
<div style="position:absolute;left:171px;top:701.3px;width:9px;height:1.4px;background:#adadad"></div>
<div style="position:absolute;left:194px;top:701.3px;width:2px;height:1.2px;background:#bdbdbd"></div>
<div style="position:absolute;left:203px;top:701.3px;width:4px;height:1.4px;background:#adadad"></div>
<div style="position:absolute;left:212px;top:701.3px;width:3px;height:1.2px;background:#bdbdbd"></div>
<div style="position:absolute;left:114px;top:709.4000000000001px;width:97px;height:0.6px;background:#dedede"></div>
<div style="position:absolute;left:115px;top:706.7px;width:3px;height:1.2px;background:#bdbdbd"></div>
<div style="position:absolute;left:123px;top:706.7px;width:3px;height:1.2px;background:#bdbdbd"></div>
<div style="position:absolute;left:132px;top:706.7px;width:12px;height:1.4px;background:#adadad"></div>
<div style="position:absolute;left:171px;top:706.7px;width:9px;height:1.4px;background:#adadad"></div>
<div style="position:absolute;left:194px;top:706.7px;width:2px;height:1.2px;background:#bdbdbd"></div>
<div style="position:absolute;left:203px;top:706.7px;width:4px;height:1.4px;background:#adadad"></div>
<div style="position:absolute;left:212px;top:706.7px;width:3px;height:1.2px;background:#bdbdbd"></div>
<div style="position:absolute;left:114px;top:714.8000000000001px;width:97px;height:0.6px;background:#dedede"></div>
<div style="position:absolute;left:115px;top:712.1px;width:3px;height:1.2px;background:#bdbdbd"></div>
<div style="position:absolute;left:123px;top:712.1px;width:3px;height:1.2px;background:#bdbdbd"></div>
<div style="position:absolute;left:132px;top:712.1px;width:10px;height:1.4px;background:#adadad"></div>
<div style="position:absolute;left:171px;top:712.1px;width:9px;height:1.4px;background:#adadad"></div>
<div style="position:absolute;left:194px;top:712.1px;width:2px;height:1.2px;background:#bdbdbd"></div>
<div style="position:absolute;left:203px;top:712.1px;width:4px;height:1.4px;background:#adadad"></div>
<div style="position:absolute;left:212px;top:712.1px;width:3px;height:1.2px;background:#bdbdbd"></div>
<div style="position:absolute;left:114px;top:720.2px;width:97px;height:0.6px;background:#dedede"></div>
<div style="position:absolute;left:115px;top:717.5px;width:3px;height:1.2px;background:#bdbdbd"></div>
<div style="position:absolute;left:123px;top:717.5px;width:3px;height:1.2px;background:#bdbdbd"></div>
<div style="position:absolute;left:132px;top:717.5px;width:8px;height:1.4px;background:#adadad"></div>
<div style="position:absolute;left:171px;top:717.5px;width:9px;height:1.4px;background:#adadad"></div>
<div style="position:absolute;left:194px;top:717.5px;width:2px;height:1.2px;background:#bdbdbd"></div>
<div style="position:absolute;left:203px;top:717.5px;width:4px;height:1.4px;background:#adadad"></div>
<div style="position:absolute;left:212px;top:717.5px;width:3px;height:1.2px;background:#bdbdbd"></div>
<div style="position:absolute;left:209px;top:666px;width:4px;height:40px;background:#c8c8c8"></div>
<div style="position:absolute;left:114px;top:721px;width:82px;height:1.5px;background:#a8a8a8"></div>
<div style="position:absolute;left:107px;top:722.5px;width:108px;height:5.5px;background:#fdfdfd"></div>
<div style="position:absolute;left:126px;top:725.5px;width:12px;height:1.2px;background:#8fc0ee"></div>
<div style="position:absolute;left:163px;top:725.5px;width:14px;height:1.2px;background:#b0b0b0"></div>
<div style="position:absolute;left:66.8px;top:696.8px;width:34.400000000000006px;height:29.200000000000045px;background:#fff;border:1px solid #9a9a9a;border-radius:5px;box-sizing:border-box"></div>
<div class="t" style="left:72.6px;top:704.4px;font-size:14.5px;color:#111;letter-spacing:-0.38px;">1...7</div>
<div style="position:absolute;left:64px;top:781px;width:152px;height:96px;background:#efefef;border:1px solid #9d9d9d;box-sizing:border-box;overflow:hidden"></div>
<div style="position:absolute;left:65px;top:782px;width:150px;height:6.5px;background:#0a78d6"></div>
<div style="position:absolute;left:67px;top:783.5px;width:2.5px;height:2.5px;background:#e8f2ff"></div>
<div style="position:absolute;left:71px;top:784px;width:20px;height:1.4px;background:#4d9be3"></div>
<div style="position:absolute;left:65px;top:788.5px;width:150px;height:34.5px;background:#d2d2d2"></div>
<div style="position:absolute;left:67px;top:788.5px;width:18.5px;height:6.5px;background:#1e6fcc;border-radius:1px"></div>
<div style="position:absolute;left:71px;top:791px;width:9px;height:1.4px;background:#8fbbe8"></div>
<div style="position:absolute;left:87px;top:788.5px;width:18.5px;height:6.5px;background:#1e6fcc;border-radius:1px"></div>
<div style="position:absolute;left:91px;top:791px;width:9px;height:1.4px;background:#8fbbe8"></div>
<div style="position:absolute;left:107px;top:788.5px;width:18.5px;height:6.5px;background:#1e6fcc;border-radius:1px"></div>
<div style="position:absolute;left:111px;top:791px;width:9px;height:1.4px;background:#8fbbe8"></div>
<div style="position:absolute;left:127px;top:788.5px;width:18.5px;height:6.5px;background:#1e6fcc;border-radius:1px"></div>
<div style="position:absolute;left:131px;top:791px;width:9px;height:1.4px;background:#8fbbe8"></div>
<div style="position:absolute;left:147px;top:788.5px;width:18.5px;height:6.5px;background:#1e6fcc;border-radius:1px"></div>
<div style="position:absolute;left:151px;top:791px;width:9px;height:1.4px;background:#8fbbe8"></div>
<div style="position:absolute;left:72px;top:800.5px;width:6px;height:1.2px;background:#9fc4ec"></div>
<div style="position:absolute;left:90px;top:800.5px;width:9px;height:1.2px;background:#9a9a9a"></div>
<div style="position:absolute;left:66px;top:804.5px;width:20px;height:1px;background:#8ab8e8"></div>
<div style="position:absolute;left:66px;top:809.0px;width:6px;height:1.3px;background:#a0a0a0"></div>
<div style="position:absolute;left:84px;top:809.0px;width:12px;height:1.3px;background:#a0a0a0"></div>
<div style="position:absolute;left:66px;top:813.7px;width:6px;height:1.3px;background:#a0a0a0"></div>
<div style="position:absolute;left:84px;top:813.7px;width:12px;height:1.3px;background:#a0a0a0"></div>
<div style="position:absolute;left:66px;top:818.4px;width:6px;height:1.3px;background:#a0a0a0"></div>
<div style="position:absolute;left:84px;top:818.4px;width:12px;height:1.3px;background:#a0a0a0"></div>
<div style="position:absolute;left:138px;top:798px;width:6px;height:1.2px;background:#aaa"></div>
<div style="position:absolute;left:154px;top:802.5px;width:6px;height:1.2px;background:#aaa"></div>
<div style="position:absolute;left:138px;top:807px;width:6px;height:1.2px;background:#aaa"></div>
<div style="position:absolute;left:154px;top:811.5px;width:6px;height:1.2px;background:#aaa"></div>
<div style="position:absolute;left:138px;top:815px;width:10px;height:0.6px;background:#bbb"></div>
<div style="position:absolute;left:141px;top:817px;width:2px;height:2px;background:#3fbf4a;border-radius:50%"></div>
<div style="position:absolute;left:145px;top:817.5px;width:11px;height:1.2px;background:#aaa"></div>
<div style="position:absolute;left:65px;top:823px;width:150px;height:53px;background:#f0f0f0"></div>
<div style="position:absolute;left:65px;top:823px;width:150px;height:6px;background:#f6f6f6"></div>
<div style="position:absolute;left:66px;top:825.5px;width:9px;height:1.2px;background:#b4b4b4"></div>
<div style="position:absolute;left:83px;top:825.5px;width:3px;height:1.2px;background:#b4b4b4"></div>
<div style="position:absolute;left:103px;top:825.5px;width:11px;height:1.2px;background:#b4b4b4"></div>
<div style="position:absolute;left:120px;top:825.5px;width:9px;height:1.2px;background:#b4b4b4"></div>
<div style="position:absolute;left:142px;top:825.5px;width:9px;height:1.2px;background:#b4b4b4"></div>
<div style="position:absolute;left:65px;top:835.5px;width:150px;height:7px;background:#e4e4e4"></div>
<div style="position:absolute;left:65px;top:835.0px;width:150px;height:0.6px;background:#e2e2e2"></div>
<div style="position:absolute;left:66px;top:831.5px;width:9px;height:1.3px;background:#b0b0b0"></div>
<div style="position:absolute;left:83px;top:831.5px;width:13px;height:1.3px;background:#b0b0b0"></div>
<div style="position:absolute;left:103px;top:831.5px;width:7px;height:1.3px;background:#b0b0b0"></div>
<div style="position:absolute;left:120px;top:831.5px;width:15px;height:1.3px;background:#b0b0b0"></div>
<div style="position:absolute;left:142px;top:831.5px;width:5px;height:1.3px;background:#b0b0b0"></div>
<div style="position:absolute;left:65px;top:841.6px;width:150px;height:0.6px;background:#e2e2e2"></div>
<div style="position:absolute;left:66px;top:838.1px;width:9px;height:1.3px;background:#b0b0b0"></div>
<div style="position:absolute;left:83px;top:838.1px;width:13px;height:1.3px;background:#b0b0b0"></div>
<div style="position:absolute;left:103px;top:838.1px;width:7px;height:1.3px;background:#b0b0b0"></div>
<div style="position:absolute;left:120px;top:838.1px;width:15px;height:1.3px;background:#b0b0b0"></div>
<div style="position:absolute;left:142px;top:838.1px;width:5px;height:1.3px;background:#b0b0b0"></div>
<div style="position:absolute;left:65px;top:848.2px;width:150px;height:0.6px;background:#e2e2e2"></div>
<div style="position:absolute;left:66px;top:844.7px;width:9px;height:1.3px;background:#b0b0b0"></div>
<div style="position:absolute;left:83px;top:844.7px;width:13px;height:1.3px;background:#b0b0b0"></div>
<div style="position:absolute;left:103px;top:844.7px;width:7px;height:1.3px;background:#b0b0b0"></div>
<div style="position:absolute;left:120px;top:844.7px;width:15px;height:1.3px;background:#b0b0b0"></div>
<div style="position:absolute;left:142px;top:844.7px;width:5px;height:1.3px;background:#b0b0b0"></div>
<div style="position:absolute;left:65px;top:854.8px;width:150px;height:0.6px;background:#e2e2e2"></div>
<div style="position:absolute;left:66px;top:851.3px;width:9px;height:1.3px;background:#b0b0b0"></div>
<div style="position:absolute;left:83px;top:851.3px;width:13px;height:1.3px;background:#b0b0b0"></div>
<div style="position:absolute;left:103px;top:851.3px;width:7px;height:1.3px;background:#b0b0b0"></div>
<div style="position:absolute;left:120px;top:851.3px;width:15px;height:1.3px;background:#b0b0b0"></div>
<div style="position:absolute;left:142px;top:851.3px;width:5px;height:1.3px;background:#b0b0b0"></div>
<div style="position:absolute;left:65px;top:861.4px;width:150px;height:0.6px;background:#e2e2e2"></div>
<div style="position:absolute;left:66px;top:857.9px;width:9px;height:1.3px;background:#b0b0b0"></div>
<div style="position:absolute;left:83px;top:857.9px;width:13px;height:1.3px;background:#b0b0b0"></div>
<div style="position:absolute;left:103px;top:857.9px;width:7px;height:1.3px;background:#b0b0b0"></div>
<div style="position:absolute;left:120px;top:857.9px;width:15px;height:1.3px;background:#b0b0b0"></div>
<div style="position:absolute;left:142px;top:857.9px;width:5px;height:1.3px;background:#b0b0b0"></div>
<div style="position:absolute;left:65px;top:868.0px;width:150px;height:0.6px;background:#e2e2e2"></div>
<div style="position:absolute;left:66px;top:864.5px;width:9px;height:1.3px;background:#b0b0b0"></div>
<div style="position:absolute;left:83px;top:864.5px;width:13px;height:1.3px;background:#b0b0b0"></div>
<div style="position:absolute;left:103px;top:864.5px;width:7px;height:1.3px;background:#b0b0b0"></div>
<div style="position:absolute;left:120px;top:864.5px;width:15px;height:1.3px;background:#b0b0b0"></div>
<div style="position:absolute;left:142px;top:864.5px;width:5px;height:1.3px;background:#b0b0b0"></div>
<div style="position:absolute;left:65px;top:874.6px;width:150px;height:0.6px;background:#e2e2e2"></div>
<div style="position:absolute;left:66px;top:871.1px;width:9px;height:1.3px;background:#b0b0b0"></div>
<div style="position:absolute;left:83px;top:871.1px;width:13px;height:1.3px;background:#b0b0b0"></div>
<div style="position:absolute;left:103px;top:871.1px;width:7px;height:1.3px;background:#b0b0b0"></div>
<div style="position:absolute;left:120px;top:871.1px;width:15px;height:1.3px;background:#b0b0b0"></div>
<div style="position:absolute;left:142px;top:871.1px;width:5px;height:1.3px;background:#b0b0b0"></div>
<div style="position:absolute;left:66.5px;top:844.5px;width:34.3px;height:30.0px;background:#fff;border:1px solid #9a9a9a;border-radius:5px;box-sizing:border-box"></div>
<div class="t" style="left:72.3px;top:852.9px;font-size:14.5px;color:#111;letter-spacing:0.77px;">8 9</div>
<div style="position:absolute;left:64px;top:929.4px;width:152px;height:38px;background:#d4d4d4;border:1px solid #9d9d9d;border-bottom:none;box-sizing:border-box;overflow:hidden"></div>
<div style="position:absolute;left:65px;top:930.4px;width:150px;height:9.5px;background:#0a78d6"></div>
<div style="position:absolute;left:67px;top:932.4px;width:4.5px;height:5px;background:#a9d3f5"></div>
<div class="t" style="left:74.0px;top:933.0px;font-size:5.5px;color:#b9dcf7;">Security</div>
<div style="position:absolute;left:65px;top:939.9px;width:1px;height:27.5px;background:#a8c8e8"></div>
<div style="position:absolute;left:68px;top:941.4px;width:3px;height:3px;background:#e8e8e8;border:0.5px solid #999;box-sizing:border-box"></div>
<div style="position:absolute;left:169px;top:941.4px;width:3px;height:3px;background:#e8e8e8;border:0.5px solid #999;box-sizing:border-box"></div>
<div class="t" style="left:73.5px;top:940.2px;font-size:5.3px;color:#555;letter-spacing:-0.45px;">Accountant Perspective</div>
<div class="t" style="left:174.5px;top:940.2px;font-size:5.3px;color:#555;letter-spacing:-0.41px;">Audit Perspective</div>
<div style="position:absolute;left:68px;top:946.9px;width:3px;height:3px;background:#e8e8e8;border:0.5px solid #999;box-sizing:border-box"></div>
<div style="position:absolute;left:169px;top:946.9px;width:3px;height:3px;background:#e8e8e8;border:0.5px solid #999;box-sizing:border-box"></div>
<div class="t" style="left:73.5px;top:945.7px;font-size:5.3px;color:#555;letter-spacing:-0.05px;">Visibility Override</div>
<div class="t" style="left:174.5px;top:945.7px;font-size:5.3px;color:#555;letter-spacing:-0.51px;">Added Detail</div>
<div style="position:absolute;left:68px;top:952.4px;width:3px;height:3px;background:#e8e8e8;border:0.5px solid #999;box-sizing:border-box"></div>
<div style="position:absolute;left:169px;top:952.4px;width:3px;height:3px;background:#e8e8e8;border:0.5px solid #999;box-sizing:border-box"></div>
<div class="t" style="left:68.2px;top:951.7px;font-size:4.5px;color:#333;">✓</div>
<div class="t" style="left:73.5px;top:951.2px;font-size:5.3px;color:#555;letter-spacing:-0.59px;">Canvas Preference</div>
<div class="t" style="left:174.5px;top:951.2px;font-size:5.3px;color:#555;letter-spacing:-0.31px;">Minimize Pilot</div>
<div style="position:absolute;left:68px;top:957.9px;width:3px;height:3px;background:#e8e8e8;border:0.5px solid #999;box-sizing:border-box"></div>
<div style="position:absolute;left:169px;top:957.9px;width:3px;height:3px;background:#e8e8e8;border:0.5px solid #999;box-sizing:border-box"></div>
<div class="t" style="left:68.2px;top:957.2px;font-size:4.5px;color:#333;">✓</div>
<div class="t" style="left:73.5px;top:956.7px;font-size:5.3px;color:#555;letter-spacing:-0.40px;">c-Index Preference</div>
<div class="t" style="left:174.5px;top:956.7px;font-size:5.3px;color:#555;letter-spacing:-0.49px;">Apply Gradient</div>
<div style="position:absolute;left:68px;top:963.4px;width:3px;height:3px;background:#e8e8e8;border:0.5px solid #999;box-sizing:border-box"></div>
<div style="position:absolute;left:169px;top:963.4px;width:3px;height:3px;background:#e8e8e8;border:0.5px solid #999;box-sizing:border-box"></div>
<div class="t" style="left:68.2px;top:962.7px;font-size:4.5px;color:#333;">✓</div>
<div class="t" style="left:169.2px;top:962.7px;font-size:4.5px;color:#333;">✓</div>
<div class="t" style="left:73.5px;top:962.2px;font-size:5.3px;color:#555;letter-spacing:-0.30px;">Insert Obfuscation</div>
<div class="t" style="left:174.5px;top:962.2px;font-size:5.3px;color:#555;letter-spacing:-0.52px;">Big Data</div>
<div style="position:absolute;left:23px;top:967px;width:240px;height:5px;background:#e9e9e9"></div>
<svg style="position:absolute;left:75.7px;top:992.3px;" width="15" height="12" viewBox="0 0 15 12"><rect x="0" y="0" width="2.5" height="11.5" fill="#111"/><path d="M14.5 0 V11.5 L3 5.75z" fill="#111"/></svg>
<svg style="position:absolute;left:95.9px;top:992.3px;" width="11" height="12" viewBox="0 0 11 12"><path d="M10.4 0 V11.5 L0 5.75z" fill="#111"/></svg>
<div class="t" style="left:119.7px;top:991.5px;font-size:14px;color:#222;">1</div>
<div class="t" style="left:138.5px;top:991.5px;font-size:14px;color:#222;letter-spacing:1.20px;">of</div>
<div class="t" style="left:162.3px;top:991.5px;font-size:14px;color:#222;">9</div>
<svg style="position:absolute;left:183.2px;top:992.3px;" width="11" height="12" viewBox="0 0 11 12"><path d="M0 0 V11.5 L10 5.75z" fill="#111"/></svg>
<svg style="position:absolute;left:199px;top:992.3px;" width="15" height="12" viewBox="0 0 15 12"><path d="M0 0 V11.5 L11 5.75z" fill="#111"/><rect x="11.7" y="0" width="2.5" height="11.5" fill="#111"/></svg>
<div style="position:absolute;left:297px;top:237px;width:945px;height:786px;background:#a6a6a6"></div>
<div style="position:absolute;left:322px;top:262px;width:894.5px;height:612px;background:#fff;border-radius:0 4px 0 0"></div>
<div style="position:absolute;left:322px;top:262px;width:120px;height:15px;background:#a6a6a6"></div>
<div style="position:absolute;left:297px;top:237px;width:145px;height:39px;background:#fff"></div>
<div style="position:absolute;left:297px;top:275.5px;width:145px;height:1.5px;background:#1b7fd6"></div>
<div class="t" style="left:304.2px;top:248.2px;font-size:14px;color:#1a1a1a;letter-spacing:-0.62px;">Tags</div>
<div style="position:absolute;left:348.5px;top:240.5px;width:62.5px;height:32px;background:#fff;border:1px solid #e6e6e6;border-radius:5px;box-sizing:border-box;box-shadow:0 1px 0 #dcdcdc"></div>
<svg style="position:absolute;left:363.5px;top:250.5px;" width="11" height="11" viewBox="0 0 11 11"><path d="M1.2 9.8 L1.8 7.2 L8.2 0.8 L10.2 2.8 L3.8 9.2z M7 2 L9 4" fill="none" stroke="#222" stroke-width="1.2" stroke-linejoin="round"/></svg>
<svg style="position:absolute;left:393.5px;top:253.5px;" width="9" height="5" viewBox="0 0 9 5"><path d="M0.5 0.5 L4.5 4.5 L8.5 0.5" fill="none" stroke="#9a9a9a" stroke-width="1"/></svg>
<svg style="position:absolute;left:421.5px;top:249.5px;" width="15" height="15" viewBox="0 0 15 15"><path d="M6.2 0.8 H8.8 L9.2 2.6 L10.6 3.3 L12.2 2.3 L13.9 4.1 L12.9 5.7 L13.4 7.1 L14.2 7.5 V8.9 L12.9 9.4 L12.3 10.8 L13.2 12.4 L11.4 14.1 L9.9 13.1 L8.6 13.6 L8.2 14.2 H6.6 L6.1 12.8 L4.8 12.2 L3.2 13.1 L1.4 11.3 L2.4 9.8 L1.9 8.4 L0.8 8 V6.3 L1.9 5.9 L2.5 4.5 L1.6 2.9 L3.4 1.1 L4.9 2.1 L6.2 1.6z" fill="none" stroke="#333" stroke-width="0.9" stroke-linejoin="round"/><circle cx="7.5" cy="7.5" r="2.4" fill="none" stroke="#333" stroke-width="0.9"/></svg>
<div class="t" style="left:337.4px;top:280.8px;font-size:18px;color:#1a1a1a;letter-spacing:0.00px;">Text Frame - All outputs</div>
<div class="t" style="left:337.4px;top:324.0px;font-size:14px;color:#1a1a1a;letter-spacing:-0.06px;">Title</div>
<div style="position:absolute;left:482px;top:319px;width:552px;height:34px;background:#fff;border:1.5px solid #5060b8;border-radius:5px;box-sizing:border-box"></div>
<div class="t" style="left:494.5px;top:330.3px;font-size:14px;color:#8a8a8a;letter-spacing:-0.23px;">My Procedure Example</div>
<div class="t" style="left:337.4px;top:373.9px;font-size:14px;color:#1a1a1a;letter-spacing:-0.18px;">Title Style</div>
<div style="position:absolute;left:485.5px;top:360.5px;width:183px;height:40.0px;background:#fff;border:1px solid #e3e3e3;border-radius:5px;box-sizing:border-box;box-shadow:0 1px 0 #d2d2d2"></div>
<div class="t" style="left:502.5px;top:373.9px;font-size:14px;color:#1a1a1a;letter-spacing:0.19px;">Title</div>
<svg style="position:absolute;left:650.5px;top:377.5px;" width="9" height="5" viewBox="0 0 9 5"><path d="M0.5 0.5 L4.5 4.5 L8.5 0.5" fill="none" stroke="#9a9a9a" stroke-width="1"/></svg>
<div class="t" style="left:677.7px;top:374.6px;font-size:14px;color:#1a1a1a;letter-spacing:0.08px;">applies to all outputs</div>
<div class="t" style="left:337.4px;top:422.4px;font-size:14px;color:#1a1a1a;letter-spacing:-0.28px;">HTML Section Level</div>
<div style="position:absolute;left:485.5px;top:408.5px;width:183px;height:42.0px;background:#fff;border:1px solid #e3e3e3;border-radius:5px;box-sizing:border-box;box-shadow:0 1px 0 #d2d2d2"></div>
<div class="t" style="left:502.5px;top:424.3px;font-size:14px;color:#1a1a1a;letter-spacing:0.12px;">Normal</div>
<svg style="position:absolute;left:650.5px;top:427.5px;" width="9" height="5" viewBox="0 0 9 5"><path d="M0.5 0.5 L4.5 4.5 L8.5 0.5" fill="none" stroke="#9a9a9a" stroke-width="1"/></svg>
<div class="t" style="left:677.7px;top:422.1px;font-size:14px;color:#1a1a1a;letter-spacing:-0.50px;">Prefix:</div>
<div class="t" style="left:724.6px;top:422.1px;font-size:14px;color:#111;-webkit-text-stroke:0.5px #111;letter-spacing:0.11px;">Step Number [X]:</div>
<div class="t" style="left:843.3px;top:422.1px;font-size:14px;color:#1a1a1a;letter-spacing:-0.00px;">applies to HTML only</div>
<div style="position:absolute;left:748.6px;top:467.7px;width:40.69999999999993px;height:41.8px;background:#fff;border:1px solid #ededed;border-radius:5px;box-sizing:border-box;box-shadow:0 1px 0 #d8d8d8"></div>
<div style="position:absolute;left:796.7px;top:467.7px;width:40.69999999999993px;height:41.8px;background:#fff;border:1px solid #ededed;border-radius:5px;box-sizing:border-box;box-shadow:0 1px 0 #d8d8d8"></div>
<div style="position:absolute;left:844.8px;top:467.7px;width:41.60000000000002px;height:41.8px;background:#fff;border:1px solid #ededed;border-radius:5px;box-sizing:border-box;box-shadow:0 1px 0 #d8d8d8"></div>
<div style="position:absolute;left:893.6px;top:467.7px;width:46.39999999999998px;height:41.8px;background:#fff;border:1px solid #ededed;border-radius:5px;box-sizing:border-box;box-shadow:0 1px 0 #d8d8d8"></div>
<div style="position:absolute;left:947.4px;top:467.7px;width:95.80000000000007px;height:41.8px;background:#fff;border:1px solid #ededed;border-radius:5px;box-sizing:border-box;box-shadow:0 1px 0 #d8d8d8"></div>
<div class="t" style="left:764.5px;top:482.0px;font-size:15.5px;color:#000;font-weight:700;">B</div>
<div class="t" style="left:814.3px;top:482.0px;font-size:15.5px;color:#000;font-style:italic;">I</div>
<div class="t" style="left:859.5px;top:482.0px;font-size:15.5px;color:#000;font-style:italic;text-decoration:underline;">U</div>
<svg style="position:absolute;left:908.5px;top:482.5px;" width="17" height="11" viewBox="0 0 17 11"><path d="M0.5 0.8 h1 M0.5 4 h1 M0.5 7 h1 M0.5 10.2 h1" stroke="#111" stroke-width="1.3"/><path d="M3.5 0.8 H16.5 M3.5 4 H16.5 M3.5 7 H16.5 M3.5 10.2 H16.5" stroke="#111" stroke-width="1.2"/></svg>
<svg style="position:absolute;left:958px;top:481.5px;" width="16" height="11" viewBox="0 0 16 11"><rect x="0.6" y="0.8" width="9.5" height="6" rx="3" transform="rotate(14 5.3 3.8)" fill="none" stroke="#333" stroke-width="1.05"/><rect x="5.4" y="4" width="9.5" height="6" rx="3" transform="rotate(14 10.1 7)" fill="none" stroke="#333" stroke-width="1.05"/></svg>
<div class="t" style="left:979.6px;top:482.0px;font-size:14px;color:#1a1a1a;letter-spacing:-0.07px;">Add Link</div>
<div class="t" style="left:337.4px;top:497.3px;font-size:14px;color:#1a1a1a;letter-spacing:0.03px;">Content</div>
<div style="position:absolute;left:482px;top:518px;width:565px;height:250px;background:#fff;border:1px solid #5b9be0;box-sizing:border-box"></div>
<div class="t" style="left:492.2px;top:520.6px;font-size:12px;color:#222;letter-spacing:0.24px;">This is an example file for you.</div>
<div class="t" style="left:664.8px;top:520.6px;font-size:12px;color:#6e6e6e;letter-spacing:0.56px;text-decoration:underline;text-decoration-color:#8a8a8a;">Step 5</div>
<div class="t" style="left:702.5px;top:520.6px;font-size:12px;color:#222;letter-spacing:0.45px;">. or you might be interested in</div>
<div class="t" style="left:877.8px;top:520.6px;font-size:12px;color:#6e6e6e;letter-spacing:0.61px;text-decoration:underline;text-decoration-color:#8a8a8a;">YouTube</div>
<div class="t" style="left:928.8px;top:520.6px;font-size:12px;color:#222;letter-spacing:0.33px;">. If there is no new</div>
<div class="t" style="left:492.2px;top:535.4px;font-size:12px;color:#222;letter-spacing:0.64px;">financial information you can go directly to</div>
<div class="t" style="left:746.8px;top:535.4px;font-size:12px;color:#6e6e6e;letter-spacing:0.27px;text-decoration:underline;text-decoration-color:#8a8a8a;">Frame: Security</div>
<div style="position:absolute;left:835px;top:534px;width:1px;height:13px;background:#111"></div>
<div class="t" style="left:337.3px;top:786.5px;font-size:14px;color:#1a1a1a;letter-spacing:0.13px;">Options</div>
<div style="position:absolute;left:485px;top:787px;width:20px;height:19.5px;background:#f5f5f5;border:1px solid #8a8a8a;border-radius:4px;box-sizing:border-box"></div>
<div class="t" style="left:515.3px;top:791.7px;font-size:14px;color:#333;letter-spacing:-0.03px;">Restart Counter Numbering from this Frame</div>
<div style="position:absolute;left:485px;top:825px;width:20px;height:19.5px;background:#f5f5f5;border:1px solid #8a8a8a;border-radius:4px;box-sizing:border-box"></div>
<div class="t" style="left:515.3px;top:829.4px;font-size:14px;color:#333;letter-spacing:-0.13px;">Insert Page Break before this Frame in Word</div>
<div class="t" style="left:1604.5px;top:265.0px;font-size:14px;color:#1a1a1a;letter-spacing:-0.61px;">Frame</div>
<div style="position:absolute;left:1599px;top:285px;width:130px;height:2.2px;background:#1273d0"></div>
<div class="t" style="left:1604.5px;top:300.0px;font-size:14px;color:#1a1a1a;letter-spacing:-0.80px;">7889VS56SG</div>
<div class="t" style="left:1704.1px;top:303.4px;font-size:10px;color:#1b1bd8;letter-spacing:0.04px;">Copy to Clipboard</div>
<div class="t" style="left:1604.5px;top:330.3px;font-size:14px;color:#1a1a1a;letter-spacing:0.11px;">Video and Audio</div>
<div style="position:absolute;left:1599px;top:350.3px;width:130px;height:2.2px;background:#1273d0"></div>
<div class="t" style="left:1604.5px;top:364.6px;font-size:14px;color:#1a1a1a;letter-spacing:-0.19px;">Audio File:</div>
<div class="t" style="left:1679.5px;top:364.6px;font-size:14px;color:#1a1a1a;letter-spacing:0.08px;">None</div>
<div class="t" style="left:1720.3px;top:367.6px;font-size:10px;color:#4b4ba3;letter-spacing:0.11px;">Edit Audio</div>
<div style="position:absolute;left:1720.3px;top:379px;width:45.3px;height:1px;background:#6a6ab0"></div>
<div style="position:absolute;left:1618px;top:1015px;width:228px;height:2px;background:#7a7a7a;border-radius:1px"></div>
<svg style="position:absolute;left:485px;top:125px;" width="80" height="90" viewBox="0 0 80 90"><path d="M4.5 5.5 L31.6 18 L10.4 34.2z" fill="#ff0000"/><path d="M18 24 L67.3 83.5" stroke="#ff0000" stroke-width="4.4"/></svg>
<div style="position:absolute;left:538px;top:200.8px;width:73.4px;height:73.4px;background:#ff0000;border-radius:50%"></div>
<div class="t" style="left:551.3px;top:216.2px;font-size:44.5px;color:#fff;font-weight:700;letter-spacing:-1.20px;">10</div>
<div style="position:absolute;left:598.7px;top:589.1px;width:73.4px;height:73.4px;background:#ff0000;border-radius:50%"></div>
<div class="t" style="left:623.5px;top:604.2px;font-size:44.5px;color:#fff;font-weight:700;">9</div>
</body></html>
